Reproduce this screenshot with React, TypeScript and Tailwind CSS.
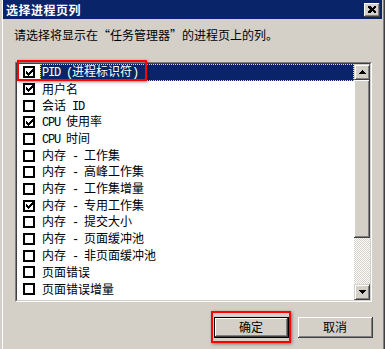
import React from 'react'

const rows: { label: string; checked: boolean }[] = [
  { label: 'PID (进程标识符)', checked: true },
  { label: '用户名', checked: true },
  { label: '会话 ID', checked: false },
  { label: 'CPU 使用率', checked: true },
  { label: 'CPU 时间', checked: false },
  { label: '内存 - 工作集', checked: false },
  { label: '内存 - 高峰工作集', checked: false },
  { label: '内存 - 工作集增量', checked: false },
  { label: '内存 - 专用工作集', checked: true },
  { label: '内存 - 提交大小', checked: false },
  { label: '内存 - 页面缓冲池', checked: false },
  { label: '内存 - 非页面缓冲池', checked: false },
  { label: '页面错误', checked: false },
  { label: '页面错误增量', checked: false },
]

// latin runs get the narrow mono look of the old dialog font
function Mixed({ text }: { text: string }) {
  const parts = text.split(/([\x20-\x7e]+)/).filter(Boolean)
  return (
    <>
      {parts.map((p, i) =>
        /^[\x20-\x7e]+$/.test(p) ? (
          <span key={i} className="font-['Liberation_Mono',monospace] tracking-[-1.2px] whitespace-pre">
            {p}
          </span>
        ) : (
          <span key={i}>{p}</span>
        )
      )}
    </>
  )
}

function CheckMark() {
  const px = [
    [6, 0], [5, 1], [6, 1], [0, 2], [4, 2], [5, 2], [6, 2],
    [0, 3], [1, 3], [3, 3], [4, 3], [5, 3], [0, 4], [1, 4], [2, 4], [3, 4], [4, 4],
    [1, 5], [2, 5], [3, 5], [2, 6],
  ]
  return (
    <svg width="7" height="7" viewBox="0 0 7 7" shapeRendering="crispEdges">
      {px.map(([x, y], i) => (
        <rect key={i} x={x} y={y} width="1" height="1" fill="#000" />
      ))}
    </svg>
  )
}

function Arrow({ up }: { up?: boolean }) {
  return (
    <svg width="7" height="4" viewBox="0 0 7 4" shapeRendering="crispEdges">
      <path d={up ? 'M3.5 0 L7 4 L0 4 Z' : 'M0 0 L7 0 L3.5 4 Z'} fill="#000" />
    </svg>
  )
}

function ScrollButton({ up }: { up?: boolean }) {
  return (
    <div className="h-[16px] w-[16px] shrink-0 flex items-center justify-center bg-[#d4d0c8] border-t border-l border-t-[#d4d0c8] border-l-[#d4d0c8] border-b border-r border-b-[#404040] border-r-[#404040] shadow-[inset_1px_1px_#ffffff,inset_-1px_-1px_#808080]">
      <Arrow up={up} />
    </div>
  )
}

export default function App() {
  return (
    <div className="relative w-[385px] h-[349px] overflow-hidden bg-[#d4d0c8] pl-[2px] border-r border-r-[#404040] font-['Noto_Sans_CJK_SC',sans-serif] text-[12px] text-black">
      <div className="h-full flex flex-col border-l border-l-white border-r border-r-[#808080] pr-[1px]">
        {/* title bar */}
        <div className="h-[19px] flex items-center justify-between bg-[#0a246a] pl-[3px] pr-[2px]">
          <span className="text-white font-bold text-[12px] tracking-[0.5px] leading-none">选择进程页列</span>
          <div className="w-[16px] h-[14px] flex items-center justify-center bg-[#d4d0c8] border-b border-r border-b-[#404040] border-r-[#404040] shadow-[inset_1px_1px_#ffffff,inset_-1px_-1px_#808080]">
            <svg width="8" height="7" viewBox="0 0 8 7" shapeRendering="crispEdges">
              <path d="M0 0h2l2 2 2-2h2v1l-2 2.5 2 2.5v1h-2l-2-2-2 2h-2v-1l2-2.5-2-2.5z" fill="#000" />
            </svg>
          </div>
        </div>

        <div className="mt-[8px] pl-[11px] leading-[16px]">请选择将显示在“任务管理器”的进程页上的列。</div>

        {/* list box */}
        <div className="mt-[19px] ml-[12px] w-[357px] h-[240px] border border-t-[#808080] border-l-[#808080] border-b-white border-r-white">
          <div className="h-full flex border border-t-[#404040] border-l-[#404040] border-b-[#d4d0c8] border-r-[#d4d0c8] bg-white">
            <div className="flex-1 overflow-hidden">
              {rows.map((r, i) => (
                <div key={i} className="h-[16.67px] flex items-center pl-[6px]">
                  <div className="w-[12px] h-[12px] shrink-0 border-2 border-black bg-white flex items-center justify-center">
                    {r.checked && <CheckMark />}
                  </div>
                  <div
                    className={
                      i === 0
                        ? 'ml-[5px] flex-1 h-full flex items-center pl-[1px] bg-[#0a246a] text-white border border-dotted border-[#e6e29a]'
                        : 'ml-[5px] flex-1 h-full flex items-center pl-[2px]'
                    }
                  >
                    <span className="leading-none whitespace-nowrap">
                      <Mixed text={r.label} />
                    </span>
                  </div>
                </div>
              ))}
            </div>
            <div className="w-[16px] flex flex-col">
              <ScrollButton up />
              <div className="h-[158px] shrink-0 bg-[#d4d0c8] border-b border-r border-b-[#404040] border-r-[#404040] shadow-[inset_1px_1px_#ffffff,inset_-1px_-1px_#808080]" />
              <div className="flex-1 bg-[repeating-conic-gradient(#ffffff_0_25%,#d4d0c8_0_50%)] bg-[length:2px_2px]" />
              <ScrollButton />
            </div>
          </div>
        </div>

        {/* buttons */}
        <div className="mt-[15px] flex justify-end gap-[9px] pr-[9px]">
          <button className="w-[75px] h-[21px] border border-black bg-[#d4d0c8]">
            <div className="h-full flex items-center justify-center border-b border-r border-b-[#404040] border-r-[#404040] shadow-[inset_1px_1px_#ffffff,inset_-1px_-1px_#808080]">
              确定
            </div>
          </button>
          <button className="w-[75px] h-[21px] flex items-center justify-center bg-[#d4d0c8] border-b border-r border-b-[#404040] border-r-[#404040] shadow-[inset_1px_1px_#ffffff,inset_-1px_-1px_#808080]">
            取消
          </button>
        </div>
      </div>

      {/* red annotation boxes */}
      <div className="absolute left-[17px] top-[60px] w-[130px] h-[21px] border-2 border-[#f00] shadow-[1px_1px_3px_rgba(0,0,0,0.45)]" />
      <div className="absolute left-[211px] top-[311px] w-[80px] h-[32px] border-2 border-[#f00] shadow-[1px_1px_3px_rgba(0,0,0,0.45)]" />
    </div>
  )
}
